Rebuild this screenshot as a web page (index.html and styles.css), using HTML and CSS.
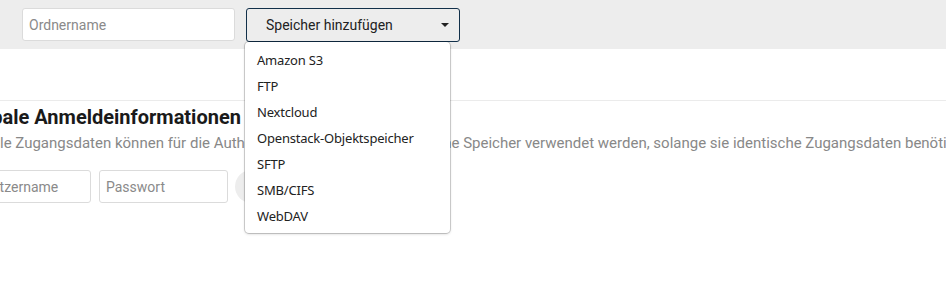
FILE: index.html
```html
<!DOCTYPE html>
<html lang="de">
<head>
    <meta charset="UTF-8">
    <meta name="viewport" content="width=device-width, initial-scale=1.0">
    <title>Externe Speicher</title>
    <link rel="stylesheet" href="styles.css">
</head>
<body>
    <div class="toolbar">
        <input class="field folder-name" type="text" placeholder="Ordnername">
        <div class="select-wrap">
            <button class="select">
                <span>Speicher hinzufügen</span>
                <span class="caret"></span>
            </button>
            <ul class="dropdown">
                <li>Amazon S3</li>
                <li>FTP</li>
                <li>Nextcloud</li>
                <li>Openstack-Objektspeicher</li>
                <li>SFTP</li>
                <li>SMB/CIFS</li>
                <li>WebDAV</li>
            </ul>
        </div>
    </div>
    <div class="section">
        <h2>Globale Anmeldeinformationen</h2>
        <p class="hint">Globale Zugangsdaten können für die Authentifizierung an mehrere externe Speicher verwendet werden, solange sie identische Zugangsdaten benötigen.</p>
        <div class="credentials">
            <input class="field user" type="text" placeholder="Benutzername">
            <input class="field pass" type="password" placeholder="Passwort">
            <button class="save">Speichern</button>
        </div>
    </div>
</body>
</html>
```

FILE: styles.css
```css
html {
    overflow: hidden;
}
body {
    margin: 0;
    min-height: 305px;
    font-family: Roboto, "Liberation Sans", sans-serif;
    color: #222;
    background: #fff;
}
.toolbar {
    display: flex;
    gap: 11px;
    height: 49px;
    box-sizing: border-box;
    padding: 8px 22px;
    background: #ededed;
}
.field {
    box-sizing: border-box;
    height: 33px;
    padding: 0 6px;
    border: 1px solid #dbdbdb;
    border-radius: 3px;
    background: #fff;
    font-family: Roboto, sans-serif;
    font-size: 14px;
    color: #222;
}
.field::placeholder {
    color: #8a8a8a;
}
.folder-name {
    width: 213px;
}
.select-wrap {
    position: relative;
}
.select {
    display: flex;
    align-items: center;
    justify-content: space-between;
    box-sizing: border-box;
    width: 214px;
    height: 34px;
    padding: 0 10px 0 19px;
    border: 1px solid #12304a;
    border-radius: 3px;
    background: #ededed;
    font-family: Roboto, sans-serif;
    font-size: 14px;
    color: #222;
}
.caret {
    width: 0;
    height: 0;
    border-left: 4px solid transparent;
    border-right: 4px solid transparent;
    border-top: 4px solid #222;
}
.dropdown {
    position: absolute;
    top: 34px;
    left: -1px;
    z-index: 2;
    box-sizing: border-box;
    width: 205px;
    margin: 0;
    padding: 5px 0 4px;
    list-style: none;
    background: #fff;
    border-radius: 4px;
    box-shadow: 0 0 0 1px rgba(0,0,0,0.16), 0 1px 3px rgba(0,0,0,0.18);
    font-family: "Noto Sans", sans-serif;
    font-size: 13px;
    letter-spacing: -0.2px;
}
.dropdown li {
    height: 26px;
    line-height: 26px;
    padding: 0 12px;
    white-space: nowrap;
}
.section {
    margin-top: 51px;
    margin-left: -39px;
    padding-top: 3px;
    border-top: 1px solid #ebebeb;
    white-space: nowrap;
}
.section h2 {
    margin: 0;
    font-size: 20px;
    font-weight: 700;
    line-height: 26px;
    color: #1a1a1a;
}
.hint {
    margin: 2px 0 0;
    font-size: 15px;
    line-height: 22px;
    color: #888;
}
.credentials {
    display: flex;
    gap: 8px;
    margin-top: 16px;
}
.user {
    width: 130px;
}
.pass {
    width: 129px;
}
.save {
    height: 33px;
    margin-left: -1px;
    padding: 0 16px;
    border: none;
    border-radius: 17px;
    background: #ededed;
    font-family: Roboto, sans-serif;
    font-size: 14px;
    color: #222;
}
```
